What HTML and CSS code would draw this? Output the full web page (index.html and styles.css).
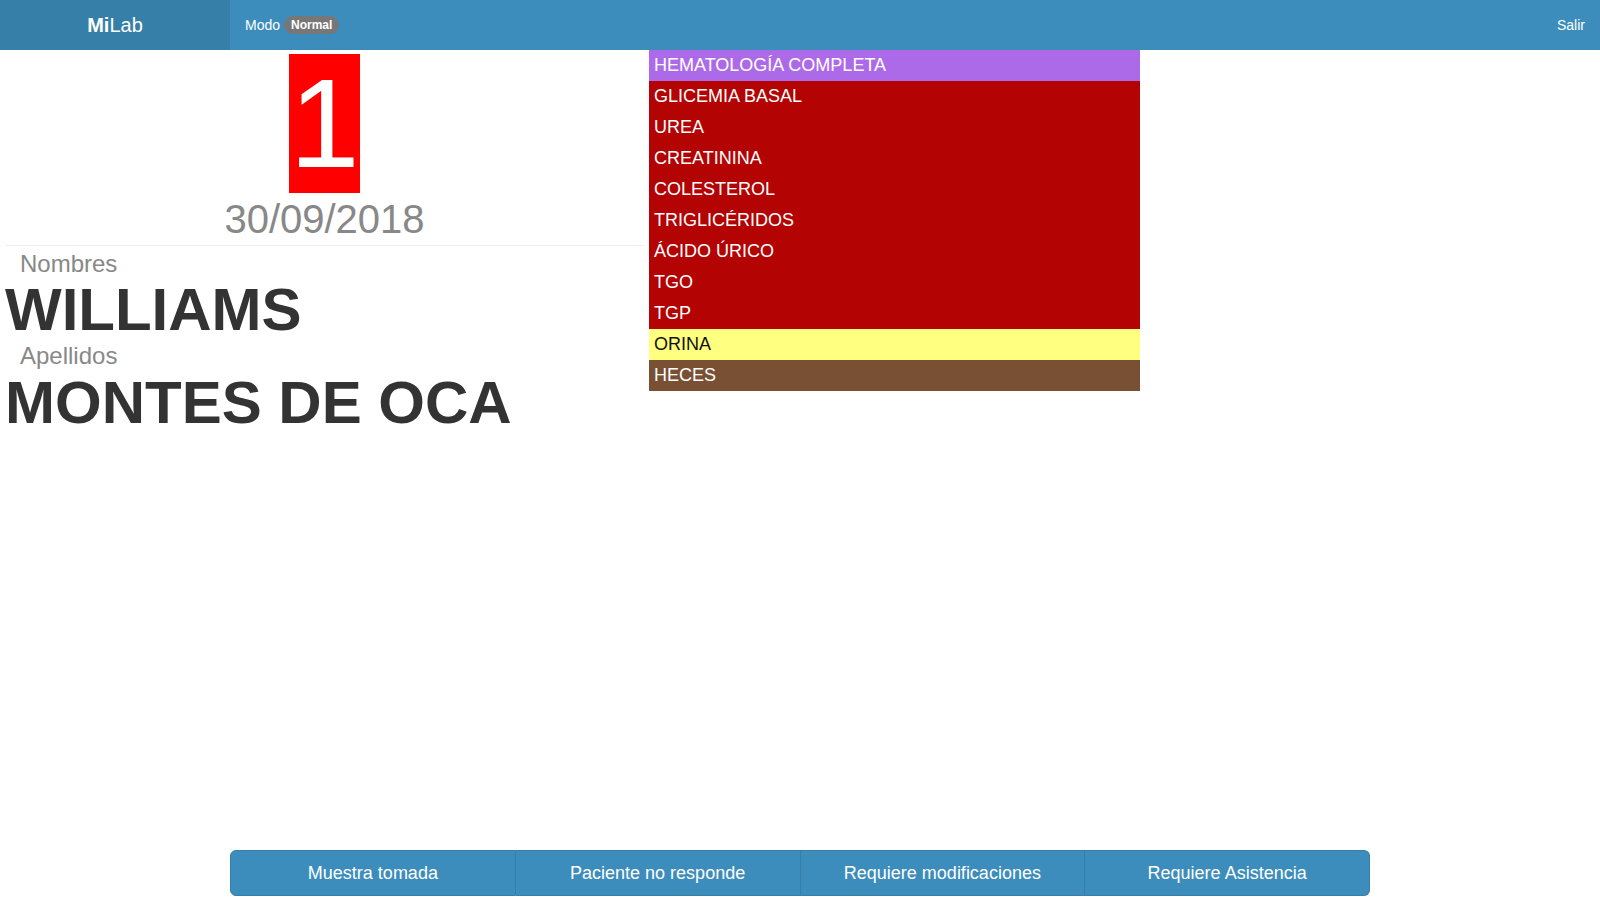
FILE: index.html
```html
<!DOCTYPE html>
<html lang="es">
<head>
<meta charset="utf-8">
<title>MiLab</title>
<link rel="stylesheet" href="styles.css">
</head>
<body>
<header class="topbar">
  <div class="brand"><b>Mi</b>Lab</div>
  <div class="mode">Modo <span class="badge">Normal</span></div>
  <div class="exit">Salir</div>
</header>
<main class="content">
  <section class="patient">
    <div class="ticket"><span class="ticket-num">1</span></div>
    <div class="date">30/09/2018</div>
    <hr class="sep">
    <div class="label">Nombres</div>
    <div class="name">WILLIAMS</div>
    <div class="label">Apellidos</div>
    <div class="name">MONTES DE OCA</div>
  </section>
  <ul class="tests">
    <li class="test purple">HEMATOLOGÍA COMPLETA</li>
    <li class="test red">GLICEMIA BASAL</li>
    <li class="test red">UREA</li>
    <li class="test red">CREATININA</li>
    <li class="test red">COLESTEROL</li>
    <li class="test red">TRIGLICÉRIDOS</li>
    <li class="test red">ÁCIDO ÚRICO</li>
    <li class="test red">TGO</li>
    <li class="test red">TGP</li>
    <li class="test yellow">ORINA</li>
    <li class="test brown">HECES</li>
  </ul>
</main>
<footer class="actions">
  <div class="btn-group">
    <button class="btn">Muestra tomada</button>
    <button class="btn">Paciente no responde</button>
    <button class="btn">Requiere modificaciones</button>
    <button class="btn">Requiere Asistencia</button>
  </div>
</footer>
</body>
</html>
```

FILE: styles.css
```css
* { box-sizing: border-box; }
html, body { margin: 0; padding: 0; }
body {
  font-family: "Liberation Sans", Arial, sans-serif;
  color: #333;
  background: #fff;
  height: 100vh;
  display: flex;
  flex-direction: column;
}
.topbar {
  height: 50px;
  background: #3c8dbc;
  color: #fff;
  display: flex;
  align-items: center;
  font-size: 14px;
}
.brand {
  width: 230px;
  height: 50px;
  background: #367fa9;
  display: flex;
  align-items: center;
  justify-content: center;
  font-size: 20px;
}
.brand b { font-weight: 700; }
.mode {
  padding-left: 15px;
  display: flex;
  align-items: center;
  gap: 4px;
}
.badge {
  display: inline-block;
  background: #777;
  color: #fff;
  font-size: 12px;
  font-weight: 700;
  line-height: 1;
  padding: 3px 7px;
  border-radius: 10px;
}
.exit {
  margin-left: auto;
  padding-right: 15px;
}
.content {
  flex: 1;
  display: grid;
  grid-template-columns: 649px 491px;
  align-items: start;
}
.patient {
  padding: 4px 5px 0;
}
.ticket {
  display: flex;
  justify-content: center;
}
.ticket-num {
  background: #ff0000;
  color: #fff;
  font-size: 126px;
  line-height: 139px;
  height: 139px;
}
.date {
  margin-top: 4px;
  text-align: center;
  font-size: 40px;
  line-height: 44px;
  color: #888;
}
.sep {
  margin: 4px 0 5px;
  border: 0;
  border-top: 1px solid #eee;
  height: 0;
}
.label {
  font-size: 24px;
  line-height: 26.4px;
  padding-left: 15px;
  color: #888;
}
.name {
  font-size: 60px;
  line-height: 66px;
  font-weight: 700;
  color: #333;
}
.tests {
  list-style: none;
  margin: 0;
  padding: 0;
}
.test {
  height: 31px;
  line-height: 31px;
  font-size: 18px;
  padding: 0 5px;
  color: #fff;
}
.purple { background: #ad6ae8; }
.red { background: #b30303; }
.yellow { background: #ffff80; color: #111; }
.brown { background: #7a5035; }
.actions {
  display: flex;
  justify-content: center;
  padding-bottom: 4px;
}
.btn-group {
  width: 1140px;
  display: flex;
}
.btn {
  flex: 1;
  height: 46px;
  margin: 0;
  font-family: inherit;
  font-size: 18px;
  color: #fff;
  background: #3c8dbc;
  border: 1px solid #367fa9;
  border-left-width: 0;
  border-radius: 0;
  padding: 10px 16px;
  line-height: 24px;
}
.btn:first-child {
  border-left-width: 1px;
  border-radius: 6px 0 0 6px;
}
.btn:last-child {
  border-radius: 0 6px 6px 0;
}
```
